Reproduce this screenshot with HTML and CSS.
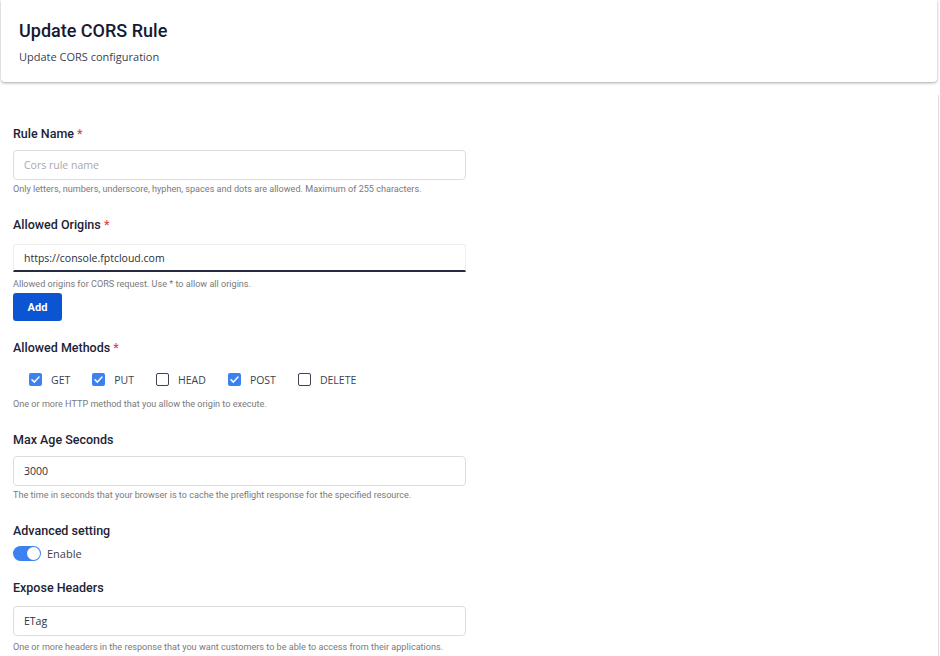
FILE: index.html
```html
<!DOCTYPE html>
<html lang="en">
<head>
    <meta charset="UTF-8">
    <meta name="viewport" content="width=device-width, initial-scale=1.0">
    <title>Update CORS Rule</title>
    <link rel="stylesheet" href="styles.css">
</head>
<body>

    <div class="page">
        <header class="page-head">
            <h1>Update CORS Rule</h1>
            <p>Update CORS configuration</p>
        </header>

        <form class="rule-form">
            <!-- Rule name -->
            <div class="field">
                <label class="field-label" for="ruleName">Rule Name <span class="req">*</span></label>
                <input class="text-input" type="text" id="ruleName" placeholder="Cors rule name">
                <div class="hint">Only letters, numbers, underscore, hyphen, spaces and dots are allowed. Maximum of 255 characters.</div>
            </div>

            <!-- Origins -->
            <div class="field origins">
                <label class="field-label origins-label" for="origin">Allowed Origins <span class="req">*</span></label>
                <input class="text-input underline" type="text" id="origin" value="https://console.fptcloud.com">
                <div class="hint">Allowed origins for CORS request. Use * to allow all origins.</div>
                <button type="button" class="btn-add">Add</button>
            </div>

            <!-- Methods -->
            <div class="field">
                <div class="field-label">Allowed Methods <span class="req">*</span></div>
                <div class="methods">
                    <span class="check on"><i><svg viewBox="0 0 14 14"><path d="M3.2 7.2l2.6 2.6 5-5.4"/></svg></i>GET</span>
                    <span class="check on"><i><svg viewBox="0 0 14 14"><path d="M3.2 7.2l2.6 2.6 5-5.4"/></svg></i>PUT</span>
                    <span class="check"><i></i>HEAD</span>
                    <span class="check on"><i><svg viewBox="0 0 14 14"><path d="M3.2 7.2l2.6 2.6 5-5.4"/></svg></i>POST</span>
                    <span class="check"><i></i>DELETE</span>
                </div>
                <div class="hint">One or more HTTP method that you allow the origin to execute.</div>
            </div>

            <!-- Max age -->
            <div class="field">
                <label class="field-label" for="maxAge">Max Age Seconds</label>
                <input class="text-input" type="text" id="maxAge" value="3000">
                <div class="hint">The time in seconds that your browser is to cache the preflight response for the specified resource.</div>
            </div>

            <!-- Advanced -->
            <div class="field">
                <div class="field-label">Advanced setting</div>
                <div class="switch-row">
                    <span class="switch"><span class="knob"></span></span>
                    <span>Enable</span>
                </div>
            </div>

            <div class="field expose">
                <label class="field-label" for="expose">Expose Headers</label>
                <input class="text-input" type="text" id="expose" value="ETag">
                <div class="hint">One or more headers in the response that you want customers to be able to access from their applications.</div>
            </div>
        </form>
    </div>

</body>
</html>
```

FILE: styles.css
```css
body {
    margin: 0;
    padding: 0;
    background-color: #fff;
    color: #1d2336;
    font-family: Roboto, 'Noto Sans', sans-serif;
}

.page {
    padding: 0 3px 0 1px;
}

.page-head {
    background-color: #fff;
    padding: 19px 18px 18px;
    border-radius: 0 0 4px 4px;
    box-shadow: 0 1px 3px rgba(0, 0, 0, 0.35);
}

.page-head h1 {
    margin: 0;
    font-family: Roboto, sans-serif;
    font-weight: 500;
    font-size: 18px;
    line-height: 24px;
    color: #141a33;
}

.page-head p {
    margin: 6px 0 0;
    font-family: 'Open Sans', sans-serif;
    font-size: 11px;
    line-height: 15px;
    color: #3a3f52;
}

.rule-form {
    margin: 13px -2px 0 -1px;
    padding: 30px 13px 0;
    border-right: 1px solid #dedede;
    height: 570px;
    box-sizing: border-box;
}

.field {
    display: flex;
    flex-direction: column;
    align-items: flex-start;
    margin-bottom: 21px;
}

.field.origins {
    margin-bottom: 18px;
}

.field-label {
    font-family: Roboto, sans-serif;
    font-size: 12.5px;
    font-weight: 500;
    line-height: 18px;
    color: #1d2336;
    margin-bottom: 7px;
}

.origins-label {
    margin-bottom: 10px;
}

.expose .field-label {
    margin-bottom: 9px;
}

.req {
    color: #e0454b;
}

.text-input {
    width: 453px;
    height: 30px;
    box-sizing: border-box;
    padding: 0 10px;
    border: 1px solid #dcdcdc;
    border-radius: 4px;
    font-family: 'Open Sans', sans-serif;
    font-size: 10.5px;
    color: #2a2f40;
    outline: none;
    background: #fff;
}

.text-input::placeholder {
    color: #a9a9a9;
}

.text-input.underline {
    height: 28px;
    border-color: #eeeeee;
    border-bottom: 2px solid #272b42;
    border-radius: 3px 3px 0 0;
}

.hint {
    margin-top: 3px;
    font-family: Roboto, sans-serif;
    font-size: 9.1px;
    line-height: 12px;
    color: #7a7a7a;
}

.origins .hint {
    margin-top: 6px;
}

.expose .hint {
    margin-top: 5px;
}

.btn-add {
    margin-top: 3px;
    width: 49px;
    height: 28px;
    border: none;
    border-radius: 3px;
    background-color: #0b55d3;
    color: #fff;
    font-family: Roboto, sans-serif;
    font-weight: 700;
    font-size: 11px;
    cursor: pointer;
}

.methods {
    display: flex;
    gap: 22px;
    padding: 6px 0 0 16px;
    height: 19px;
    align-items: center;
    margin-bottom: 6px;
}

.check {
    display: flex;
    align-items: center;
    gap: 9px;
    font-family: 'Open Sans', sans-serif;
    font-size: 10.5px;
    color: #3c4150;
}

.check i {
    width: 13px;
    height: 13px;
    box-sizing: border-box;
    border: 1.5px solid #3d4255;
    border-radius: 2px;
    display: flex;
}

.check.on i {
    border: none;
    background-color: #3b82f0;
}

.check svg {
    width: 13px;
    height: 13px;
    fill: none;
    stroke: #fff;
    stroke-width: 1.6;
    stroke-linecap: round;
    stroke-linejoin: round;
}

.switch-row {
    display: flex;
    align-items: center;
    gap: 6px;
    font-family: 'Open Sans', sans-serif;
    font-size: 11px;
    color: #3c4150;
    margin-top: -1px;
    margin-bottom: -3px;
}

.switch {
    width: 28px;
    height: 15px;
    border-radius: 8px;
    background-color: #3b82f0;
    display: flex;
    align-items: center;
    justify-content: flex-end;
    padding: 1px;
    box-sizing: border-box;
}

.knob {
    width: 13px;
    height: 13px;
    border-radius: 50%;
    background: #fff;
}
```
